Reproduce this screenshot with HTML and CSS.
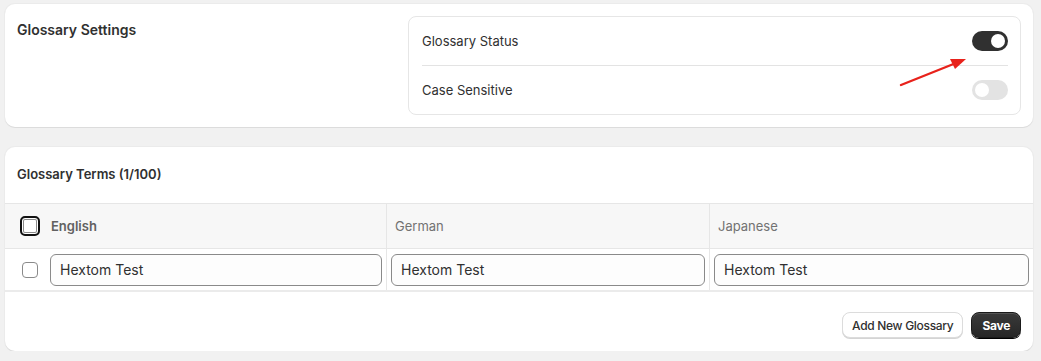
FILE: index.html
```html
<!DOCTYPE html>
<html>
  <head>
    <meta charset="utf-8">
    <title>Glossary</title>
    <link rel="stylesheet" href="styles.css">
  </head>
  <body>
    <div class="card settings">
      <h2 class="card-title">Glossary Settings</h2>
      <div class="options">
        <div class="option">
          <span>Glossary Status</span>
          <span class="toggle on"></span>
        </div>
        <div class="option">
          <span>Case Sensitive</span>
          <span class="toggle"></span>
        </div>
      </div>
      <svg class="arrow" width="80" height="40" viewBox="0 0 80 40">
        <line x1="3" y1="36" x2="58" y2="14" stroke="#e8221b" stroke-width="2.4" stroke-linecap="round"/>
        <polygon points="68,10 52,10 57,20" fill="#e8221b"/>
      </svg>
    </div>

    <div class="card terms">
      <h3 class="terms-title">Glossary Terms (1/100)</h3>
      <div class="table">
        <div class="cell head first">
          <span class="check focus"></span>
          <span class="lang bold">English</span>
        </div>
        <div class="cell head"><span class="lang">German</span></div>
        <div class="cell head"><span class="lang">Japanese</span></div>

        <div class="cell first">
          <span class="check"></span>
          <input class="field" value="Hextom Test">
        </div>
        <div class="cell"><input class="field" value="Hextom Test"></div>
        <div class="cell"><input class="field" value="Hextom Test"></div>
      </div>
      <div class="actions">
        <button class="btn">Add New Glossary</button>
        <button class="btn primary">Save</button>
      </div>
    </div>
  </body>
</html>
```

FILE: styles.css
```css
body {
  margin: 0;
  padding: 4px 8px 0 5px;
  background: #f1f1f1;
  font-family: Inter, "Noto Sans", sans-serif;
  color: #303030;
}
.card {
  background: #fff;
  border-radius: 10px;
  box-shadow: 0 1px 0 #dcdcdc, 0 0 0 1px #ebebeb;
}
.settings {
  position: relative;
  display: flex;
  justify-content: space-between;
  padding: 12px 12px 12px 12px;
  height: 99px;
}
.card-title {
  margin: 5px 0 0;
  font-size: 14px;
  font-weight: 600;
}
.options {
  width: 586px;
  border: 1px solid #e6e6e6;
  border-radius: 8px;
  padding: 0 12px 0 13px;
}
.option {
  display: flex;
  justify-content: space-between;
  align-items: center;
  height: 48px;
  font-size: 13px;
}
.option + .option {
  border-top: 1px solid #e3e3e3;
}
.toggle {
  position: relative;
  width: 36px;
  height: 20px;
  border-radius: 10px;
  background: #e3e3e3;
}
.toggle::after {
  content: "";
  position: absolute;
  top: 3px;
  left: 3px;
  width: 14px;
  height: 14px;
  border-radius: 50%;
  background: #fff;
}
.toggle.on {
  background: #303030;
}
.toggle.on::after {
  left: 19px;
}
.arrow {
  position: absolute;
  left: 893px;
  top: 45px;
}
.terms {
  margin-top: 20px;
  height: 204px;
  overflow: hidden;
}
.terms-title {
  margin: 0;
  padding: 19px 12px 0;
  height: 37px;
  font-size: 13px;
  font-weight: 600;
}
.table {
  display: grid;
  grid-template-columns: 381px 323px 1fr;
  border-top: 1px solid #e6e6e6;
  border-bottom: 2px solid #ebebeb;
}
.cell {
  display: flex;
  align-items: center;
  padding: 0 4px;
  height: 41px;
}
.cell + .cell {
  border-left: 1px solid #e6e6e6;
}
.cell:nth-child(4) {
  border-left: none;
}
.head {
  height: 44px;
  background: #f7f7f7;
  border-bottom: 1px solid #e6e6e6;
}
.first {
  padding-left: 15px;
  gap: 12px;
}
.head.first {
  gap: 10px;
}
.lang {
  font-size: 13px;
  color: #727272;
  padding-left: 1px;
}
.head + .head .lang {
  padding-left: 4px;
}
.lang.bold {
  font-weight: 600;
  color: #616161;
}
.check {
  box-sizing: border-box;
  flex: none;
  width: 16px;
  height: 16px;
  margin-left: 2px;
  border: 1px solid #8a8a8a;
  border-radius: 4px;
  background: #fff;
}
.check.focus {
  width: 20px;
  height: 20px;
  margin-left: 0;
  border: 2px solid #111;
  border-radius: 5px;
  box-shadow: inset 0 0 0 1px #fff, inset 0 0 0 2px #8a8a8a;
}
.field {
  flex: 1;
  box-sizing: border-box;
  height: 32px;
  padding: 0 9px;
  border: 1px solid #8a8a8a;
  border-radius: 6px;
  background: #fdfdfd;
  font: 14px Inter, "Noto Sans", sans-serif;
  color: #303030;
}
.actions {
  display: flex;
  justify-content: flex-end;
  gap: 8px;
  padding: 20px 12px 0;
}
.btn {
  height: 26px;
  padding: 0 9px;
  border: 1px solid #dcdcdc;
  border-radius: 8px;
  background: #fff;
  font: 500 12px Inter, "Noto Sans", sans-serif;
  letter-spacing: -0.3px;
  color: #303030;
  box-shadow: 0 1px 0 #d4d4d4;
}
.btn.primary {
  background: linear-gradient(#3a3a3a, #262626);
  border-color: #1a1a1a;
  color: #fff;
  font-weight: 700;
  padding: 0 10px;
  box-shadow: inset 0 1px 0 #555, 0 1px 0 #000;
}
```
